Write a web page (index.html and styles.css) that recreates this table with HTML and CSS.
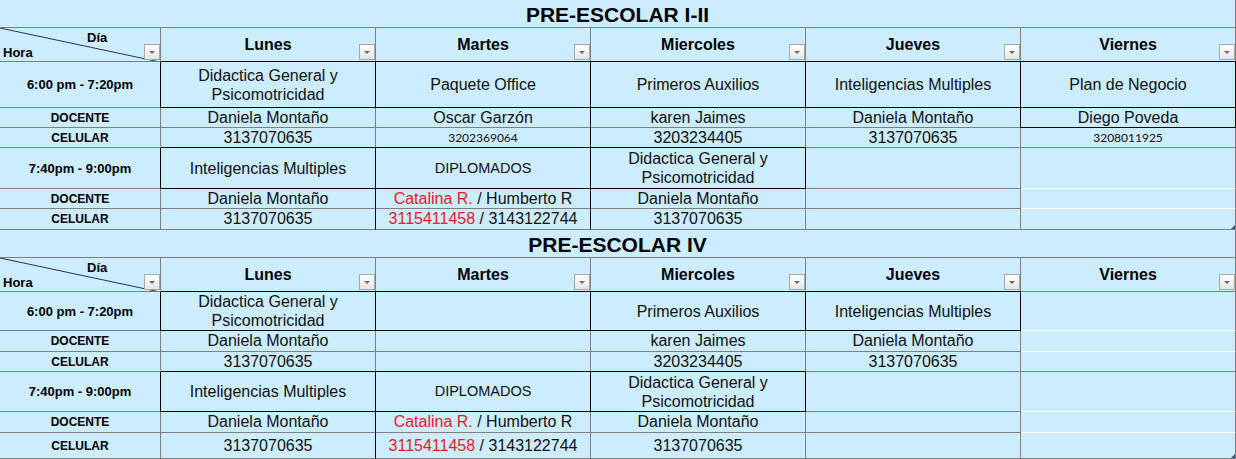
FILE: index.html
```html
<!DOCTYPE html>
<html lang="es">
<head>
<meta charset="utf-8">
<title>Horario Pre-escolar</title>
<link rel="stylesheet" href="styles.css">
</head>
<body>
<table class="sheet">
  <colgroup>
    <col class="c-hora"><col class="c-day"><col class="c-day"><col class="c-day"><col class="c-day"><col class="c-day">
  </colgroup>
  <tbody>
    <!-- ===== PRE-ESCOLAR I-II ===== -->
    <tr class="r-title"><td colspan="6" class="title">PRE-ESCOLAR I-II</td></tr>
    <tr class="r-head">
      <td class="corner">
        <svg class="diag" width="160" height="34" viewBox="0 0 160 34"><line x1="0" y1="0" x2="160" y2="34"/></svg>
        <div class="dia">Día</div>
        <div class="hora">Hora</div>
        <span class="dd"></span>
      </td>
      <td class="day bk">Lunes<span class="dd"></span></td>
      <td class="day bk">Martes<span class="dd"></span></td>
      <td class="day bk">Miercoles<span class="dd"></span></td>
      <td class="day bk">Jueves<span class="dd"></span></td>
      <td class="day bk">Viernes<span class="dd"></span></td>
    </tr>
    <tr class="r-s46">
      <td class="slot rk">6:00 pm - 7:20pm</td>
      <td class="rk bk">Didactica General y Psicomotricidad</td>
      <td class="rk bk">Paquete Office</td>
      <td class="rk bk">Primeros Auxilios</td>
      <td class="rk bk">Inteligencias Multiples</td>
      <td class="rk bk">Plan de Negocio</td>
    </tr>
    <tr class="r-20">
      <td class="lbl">DOCENTE</td>
      <td>Daniela Montaño</td>
      <td class="rk">Oscar Garzón</td>
      <td>karen Jaimes</td>
      <td class="rk">Daniela Montaño</td>
      <td class="bk rk">Diego Poveda</td>
    </tr>
    <tr class="r-20">
      <td class="lbl">CELULAR</td>
      <td class="bk">3137070635</td>
      <td class="bk rk small">3202369064</td>
      <td class="bk">3203234405</td>
      <td>3137070635</td>
      <td class="small">3208011925</td>
    </tr>
    <tr class="r-41">
      <td class="slot rk">7:40pm - 9:00pm</td>
      <td class="rk bk">Inteligencias Multiples</td>
      <td class="rk bk dipl">DIPLOMADOS</td>
      <td class="rk bk">Didactica General y Psicomotricidad</td>
      <td></td>
      <td class="bw"></td>
    </tr>
    <tr class="r-20">
      <td class="lbl">DOCENTE</td>
      <td class="rk">Daniela Montaño</td>
      <td class="rk"><span class="red">Catalina R.</span> / Humberto R</td>
      <td>Daniela Montaño</td>
      <td></td>
      <td class="bw"></td>
    </tr>
    <tr class="r-21">
      <td class="lbl">CELULAR</td>
      <td class="rk">3137070635</td>
      <td class="rk"><span class="red">3115411458</span> / 3143122744</td>
      <td>3137070635</td>
      <td></td>
      <td class="end"><span class="handle"></span></td>
    </tr>

    <!-- ===== PRE-ESCOLAR IV ===== -->
    <tr class="r-title"><td colspan="6" class="title">PRE-ESCOLAR IV</td></tr>
    <tr class="r-head">
      <td class="corner">
        <svg class="diag" width="160" height="34" viewBox="0 0 160 34"><line x1="0" y1="0" x2="160" y2="34"/></svg>
        <div class="dia">Día</div>
        <div class="hora">Hora</div>
        <span class="dd"></span>
      </td>
      <td class="day bk">Lunes<span class="dd"></span></td>
      <td class="day bk">Martes<span class="dd"></span></td>
      <td class="day bk">Miercoles<span class="dd"></span></td>
      <td class="day bk">Jueves<span class="dd"></span></td>
      <td class="day">Viernes<span class="dd"></span></td>
    </tr>
    <tr class="r-39">
      <td class="slot rk">6:00 pm - 7:20pm</td>
      <td class="rk bk">Didactica General y Psicomotricidad</td>
      <td class="rk bk"></td>
      <td class="rk bk">Primeros Auxilios</td>
      <td class="rk bk">Inteligencias Multiples</td>
      <td class="bw"></td>
    </tr>
    <tr class="r-21">
      <td class="lbl">DOCENTE</td>
      <td>Daniela Montaño</td>
      <td></td>
      <td>karen Jaimes</td>
      <td>Daniela Montaño</td>
      <td class="bw"></td>
    </tr>
    <tr class="r-20">
      <td class="lbl">CELULAR</td>
      <td class="bk">3137070635</td>
      <td class="bk"></td>
      <td class="bk">3203234405</td>
      <td>3137070635</td>
      <td></td>
    </tr>
    <tr class="r-40">
      <td class="slot rk">7:40pm - 9:00pm</td>
      <td class="rk bk">Inteligencias Multiples</td>
      <td class="rk bk dipl">DIPLOMADOS</td>
      <td class="rk bk">Didactica General y Psicomotricidad</td>
      <td></td>
      <td class="bw"></td>
    </tr>
    <tr class="r-21">
      <td class="lbl">DOCENTE</td>
      <td class="rk">Daniela Montaño</td>
      <td><span class="red">Catalina R.</span> / Humberto R</td>
      <td>Daniela Montaño</td>
      <td></td>
      <td class="bw"></td>
    </tr>
    <tr class="r-26">
      <td class="lbl">CELULAR</td>
      <td class="rk">3137070635</td>
      <td><span class="red">3115411458</span> / 3143122744</td>
      <td>3137070635</td>
      <td></td>
      <td class="end"><span class="handle"></span></td>
    </tr>
  </tbody>
</table>
</body>
</html>
```

FILE: styles.css
```css
* { box-sizing: border-box; }

html, body {
  margin: 0;
  padding: 0;
  background: #ccecff;
}

body {
  width: 1236px;
  height: 459px;
  overflow: hidden;
  font-family: "Liberation Sans", Arial, sans-serif;
  color: #111;
}

.sheet {
  width: 1236px;
  table-layout: fixed;
  border-collapse: separate;
  border-spacing: 0;
  background: #ccecff;
}

.c-hora { width: 161px; }
.c-day { width: 215px; }

.sheet td {
  padding: 0;
  border-right: 1px solid #7f7f7f;
  border-bottom: 1px solid #7f7f7f;
  text-align: center;
  vertical-align: middle;
  font-size: 16px;
  line-height: 18px;
  overflow: hidden;
}

/* border modifiers */
.sheet td.rk { border-right-color: #000; }
.sheet td.bk { border-bottom-color: #000; }
.sheet td.bw { border-bottom-color: #ffffff; }

/* row heights (border-box, incl. bottom gridline) */
.r-title td { height: 28px; }
.r-head td { height: 34px; }
.r-s46 td { height: 46px; line-height: 19px; }
.r-41 td { height: 41px; line-height: 19px; }
.r-40 td { height: 40px; line-height: 19px; }
.r-39 td { height: 39px; line-height: 19px; }
.r-20 td { height: 20px; }
.r-21 td { height: 21px; }
.r-26 td { height: 26px; }

.sheet td.title {
  font-size: 21px;
  font-weight: bold;
  line-height: 24px;
  padding-top: 2px;
  color: #000;
}

.sheet td.day {
  position: relative;
  font-weight: bold;
  font-size: 16px;
  color: #000;
}

.sheet td.corner {
  position: relative;
  text-align: left;
  vertical-align: top;
  padding-top: 2px;
  font-size: 13px;
  font-weight: bold;
  line-height: 15px;
  color: #000;
}

.diag {
  position: absolute;
  left: 0;
  top: 0;
  display: block;
}
.diag line {
  stroke: #25344f;
  stroke-width: 1;
}

.dia {
  position: relative;
  padding-left: 87px;
}
.hora {
  position: relative;
  padding-left: 3px;
}

.dd {
  position: absolute;
  right: 0;
  bottom: 1px;
  width: 16px;
  height: 16px;
  border: 1px solid #a8a8a8;
  background: linear-gradient(#ffffff, #e4e4e4);
}
.dd::after {
  content: "";
  position: absolute;
  left: 4px;
  top: 6px;
  width: 0;
  height: 0;
  border-left: 3px solid transparent;
  border-right: 3px solid transparent;
  border-top: 3px solid #6b6b6b;
}

.sheet td.slot {
  font-size: 13px;
  font-weight: bold;
  color: #000;
}

.sheet td.lbl {
  font-size: 12px;
  font-weight: bold;
  line-height: 14px;
  color: #000;
}

.sheet td.small {
  font-family: Lato, "Liberation Sans", sans-serif;
  font-size: 12px;
}

.sheet td.dipl {
  font-size: 14.5px;
}

.red { color: #e8191e; }

.sheet td.end { position: relative; }
.handle {
  position: absolute;
  right: 0;
  bottom: 0;
  width: 0;
  height: 0;
  border-left: 4px solid transparent;
  border-bottom: 4px solid #34507e;
}
```
